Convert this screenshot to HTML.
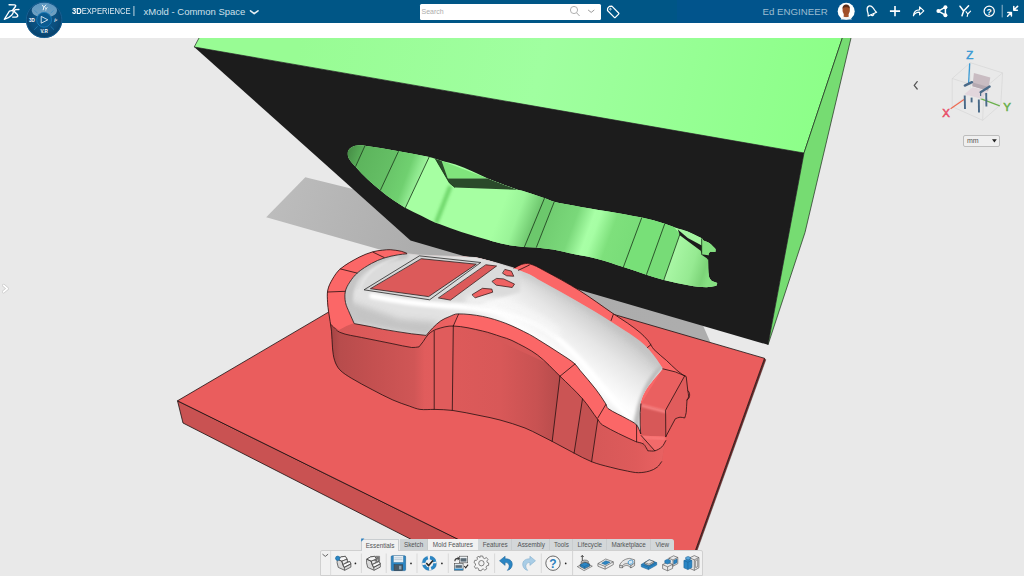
<!DOCTYPE html>
<html>
<head>
<meta charset="utf-8">
<title>3DEXPERIENCE - xMold</title>
<style>
html,body{margin:0;padding:0;overflow:hidden;}
body{width:1024px;height:576px;overflow:hidden;background:#e9e9e9;font-family:"Liberation Sans",sans-serif;position:relative;}
#scene{position:absolute;left:0;top:0;width:1024px;height:576px;}
#topbar{position:absolute;left:0;top:0;width:1024px;height:22.5px;background:#005686;}
#whiteband{position:absolute;left:0;top:22.5px;width:1024px;height:15.5px;background:#ffffff;}
.abs{position:absolute;}
#brand{position:absolute;left:72px;top:6.1px;font-size:8.3px;transform:scaleX(0.915);transform-origin:0 0;color:#e6eef3;letter-spacing:0;white-space:nowrap;line-height:10px;}
#brand b{color:#ffffff;}
#space{position:absolute;left:143.5px;top:5.7px;font-size:9.5px;color:#cfe0ea;white-space:nowrap;line-height:12px;}
#search{position:absolute;left:420px;top:4px;width:181px;height:15.5px;background:#fff;border-radius:1.5px;}
#search span{position:absolute;left:1.5px;top:3.2px;font-size:7px;color:#acacac;line-height:9px;}
#user{position:absolute;left:762.5px;top:6.3px;font-size:9.7px;color:#9dbdd1;white-space:nowrap;line-height:12px;}
#uiover{position:absolute;left:0;top:0;width:1024px;height:576px;}
/* bottom toolbar */
#tabs{position:absolute;left:360.5px;top:538.5px;height:12px;display:flex;font-size:6.6px;color:#4a4a4a;line-height:12px;}
#tabs div{background:#d2d6d8;border-right:1px solid #c2c6c8;padding:0 3.2px;white-space:nowrap;box-sizing:border-box;height:12px;}
#tabs div.on{background:#f1f1f1;}
#toolbar{position:absolute;left:320px;top:550.2px;width:383.2px;height:25.8px;background:#f1f1f1;border:1px solid #d0d0d0;box-sizing:border-box;border-radius:2px 2px 0 0;}
#mm{position:absolute;left:962.5px;top:134.5px;width:37.5px;height:12.5px;box-sizing:border-box;border:1px solid #bdbdbd;border-radius:2px;background:#efefef;font-size:7px;color:#555;line-height:10.5px;}
#mm span{position:absolute;left:3.5px;top:0;}
#tabs2 div{position:absolute;top:538.6px;height:11.9px;box-sizing:border-box;font-size:6.3px;line-height:12.4px;color:#505355;text-align:center;white-space:nowrap;overflow:hidden;}
#tabs2{position:absolute;left:0;top:0;}
</style>
</head>
<body>
<svg id="scene" width="1024" height="576" viewBox="0 0 1024 576">
<defs>

<linearGradient id="gTop" gradientUnits="userSpaceOnUse" x1="300" y1="40" x2="820" y2="160">
 <stop offset="0" stop-color="#98fc94"/><stop offset="0.45" stop-color="#a0ffa0"/><stop offset="1" stop-color="#8cff88"/>
</linearGradient>
<linearGradient id="gShadow" gradientUnits="userSpaceOnUse" x1="280" y1="190" x2="700" y2="330">
 <stop offset="0" stop-color="#bcbcbc"/><stop offset="0.35" stop-color="#acacac"/><stop offset="1" stop-color="#adadad"/>
</linearGradient>

<clipPath id="cavClip"><path d="M347.8,152.4 C347.8,151.4 348.4,150.4 349.0,149.5 C349.5,148.8 350.2,148.2 350.9,147.7 C351.7,147.1 352.6,146.5 353.5,146.2 C354.7,145.8 355.9,145.5 357.2,145.4 C359.8,145.3 362.4,145.3 365.0,145.7 C376.2,147.3 387.4,149.2 398.6,151.2 C408.8,153.0 419.0,155.0 429.1,157.1 C431.2,157.5 433.2,158.1 435.3,158.7 C437.4,159.3 439.5,160.1 441.6,160.7 C446.3,162.1 451.0,163.0 455.6,164.6 C461.4,166.6 467.1,169.2 472.8,171.6 C477.8,173.8 482.8,176.2 487.8,178.4 C491.8,180.1 495.9,181.7 500.0,183.3 C505.8,185.5 511.6,187.7 517.5,189.7 C519.0,190.2 520.7,190.3 522.2,190.8 C529.0,192.9 535.8,195.2 542.5,197.5 C546.7,198.9 550.7,200.8 555.0,201.9 C560.6,203.4 566.3,204.1 572.0,205.2 C578.0,206.3 584.0,207.4 590.0,208.4 C595.6,209.4 601.2,210.2 606.8,211.2 C618.5,213.3 630.2,215.1 641.8,217.6 C649.6,219.3 657.2,221.4 664.8,223.7 C668.6,224.8 672.2,226.5 675.9,227.7 C679.8,229.0 684.0,229.8 687.8,231.4 C692.6,233.3 697.2,235.6 701.7,238.2 C702.6,238.7 702.7,240.1 703.5,240.6 C705.5,241.8 708.0,242.1 709.9,243.4 C712.1,244.9 713.6,247.1 715.5,248.9 C715.5,249.8 715.5,250.8 715.5,251.7 C713.6,251.7 711.8,251.7 709.9,251.7 C709.3,252.9 708.4,254.1 708.1,255.4 C707.8,256.9 708.0,258.5 708.1,260.0 C708.3,265.5 708.0,271.1 709.0,276.5 C709.3,278.3 710.9,279.6 711.8,281.1 C713.6,281.7 715.5,282.4 717.3,283.0 C717.0,283.9 716.7,284.8 716.4,285.7 C713.0,286.2 709.7,287.2 706.3,287.2 C700.7,287.1 695.2,286.3 689.7,285.4 C681.0,283.9 672.4,282.0 663.9,279.9 C658.0,278.4 652.2,276.5 646.4,274.7 C638.7,272.2 631.1,269.5 623.4,267.0 C614.8,264.2 606.3,261.3 597.6,259.0 C588.5,256.6 579.2,255.1 570.0,253.2 C564.3,252.0 558.7,250.6 553.0,249.6 C547.5,248.7 541.9,248.0 536.3,247.5 C532.1,247.1 528.0,247.2 523.8,246.9 C519.6,246.6 515.4,246.3 511.3,245.6 C505.0,244.5 498.7,243.0 492.5,241.3 C482.0,238.4 471.6,235.2 461.3,231.9 C454.1,229.6 447.1,226.9 440.0,224.3 C436.6,223.0 433.3,221.7 430.0,220.2 C427.0,218.8 424.2,217.2 421.3,215.7 C416.1,213.1 410.7,210.7 405.6,207.9 C401.3,205.5 397.1,202.8 393.1,200.0 C388.8,197.0 384.7,193.7 380.6,190.4 C376.4,187.0 372.1,183.6 368.1,179.8 C363.7,175.7 359.6,171.3 355.6,166.8 C353.1,164.0 350.4,161.2 348.6,157.9 C347.7,156.3 347.7,154.3 347.8,152.4Z"/></clipPath>
<linearGradient id="gS0" gradientUnits="userSpaceOnUse" x1="348" y1="152" x2="363" y2="157"><stop offset="0" stop-color="#478f47"/><stop offset="1" stop-color="#5cb45c"/></linearGradient>
<linearGradient id="gS1" gradientUnits="userSpaceOnUse" x1="360" y1="160" x2="392" y2="172"><stop offset="0" stop-color="#5db55d"/><stop offset="1" stop-color="#66c066"/></linearGradient>
<linearGradient id="gS2" gradientUnits="userSpaceOnUse" x1="387" y1="170" x2="421" y2="182.6"><stop offset="0" stop-color="#68c468"/><stop offset="0.55" stop-color="#70d070"/><stop offset="0.78" stop-color="#8ce68c"/><stop offset="1" stop-color="#a2f6a0"/></linearGradient>
<linearGradient id="gS3" gradientUnits="userSpaceOnUse" x1="500" y1="213" x2="536" y2="226.3"><stop offset="0" stop-color="#a6ffa2"/><stop offset="0.45" stop-color="#9af498"/><stop offset="1" stop-color="#68c068"/></linearGradient>
<linearGradient id="gS5" gradientUnits="userSpaceOnUse" x1="543" y1="222" x2="634" y2="255.6"><stop offset="0" stop-color="#70cc70"/><stop offset="0.3" stop-color="#7ad87a"/><stop offset="0.47" stop-color="#a8ffa6"/><stop offset="0.53" stop-color="#a6fea4"/><stop offset="0.7" stop-color="#7ee07c"/><stop offset="1" stop-color="#78dc78"/></linearGradient>
<linearGradient id="gS8" gradientUnits="userSpaceOnUse" x1="671" y1="255" x2="712" y2="268"><stop offset="0" stop-color="#aaf8a6"/><stop offset="0.55" stop-color="#96ea92"/><stop offset="0.85" stop-color="#7cd478"/><stop offset="1" stop-color="#86e082"/></linearGradient>
<filter id="blur2" x="-50%" y="-50%" width="200%" height="200%"><feGaussianBlur stdDeviation="1.6"/></filter>
<filter id="blur1" x="-50%" y="-50%" width="200%" height="200%"><feGaussianBlur stdDeviation="0.8"/></filter>
<filter id="blur3" x="-50%" y="-50%" width="200%" height="200%"><feGaussianBlur stdDeviation="3"/></filter>
<!--PARTDEFS_START-->
<clipPath id="silClip"><path d="M406.7,253.3 C404.9,252.6 403.2,251.7 401.3,251.3 C397.7,250.5 394.0,249.9 390.3,249.7 C387.7,249.5 385.1,249.9 382.5,250.2 C379.3,250.6 376.1,250.8 373.1,251.7 C368.3,253.1 363.5,254.9 359.1,257.2 C352.6,260.6 346.0,264.2 340.3,268.9 C337.0,271.6 334.7,275.4 332.5,279.1 C330.5,282.5 328.6,286.1 327.8,290.0 C326.9,294.1 327.4,298.3 327.6,302.5 C327.7,305.6 328.2,308.8 328.6,311.9 C329.5,318.4 330.8,324.8 331.5,331.2 C332.1,336.8 331.9,342.4 332.5,347.9 C332.9,352.1 333.3,356.4 334.6,360.4 C335.7,363.8 337.3,367.2 339.8,369.8 C343.0,373.2 347.2,375.6 351.2,378.1 C358.0,382.2 365.1,385.9 372.1,389.6 C379.0,393.2 385.8,396.9 392.9,400.0 C398.3,402.4 404.0,404.3 409.6,406.2 C413.0,407.4 416.4,408.9 420.0,409.4 C424.7,410.0 429.5,409.3 434.2,409.4 C440.2,409.6 446.3,409.6 452.3,410.4 C461.6,411.7 470.8,413.7 480.0,415.6 C486.7,416.9 493.4,418.2 500.0,420.0 C508.4,422.3 516.8,424.9 525.0,428.0 C530.2,430.0 535.0,432.7 540.0,435.2 C544.1,437.2 548.2,439.3 552.2,441.4 C559.5,445.2 566.7,449.3 574.1,453.1 C579.9,456.1 585.5,459.3 591.6,461.7 C597.7,464.1 604.0,465.6 610.3,467.2 C616.0,468.7 621.7,470.0 627.5,471.1 C631.1,471.8 634.7,472.7 638.4,472.7 C642.1,472.7 645.8,472.1 649.4,471.1 C652.2,470.3 654.9,469.0 657.2,467.2 C659.1,465.8 660.7,463.9 661.6,461.7 C662.9,458.5 662.7,455.0 663.4,451.6 C664.1,447.9 665.2,444.3 665.8,440.6 C666.0,439.3 665.3,437.9 665.8,436.7 C668.5,430.5 672.1,424.7 675.3,418.8 C676.9,418.2 678.4,417.3 680.0,417.2 C681.6,417.1 683.1,417.7 684.7,418.0 C685.2,416.2 686.0,414.4 686.2,412.5 C686.8,408.4 686.4,404.1 687.0,400.0 C687.2,398.9 688.5,398.1 688.6,396.9 C688.8,394.8 688.0,392.7 687.8,390.6 C687.3,385.9 686.8,381.3 686.2,376.6 C685.7,376.3 685.2,376.1 684.7,375.8 C684.2,375.5 683.6,375.3 683.1,375.0 C681.0,373.5 678.9,372.0 676.9,370.3 C673.3,367.2 670.1,363.8 666.6,360.6 C662.5,356.9 658.0,353.6 654.1,349.7 C652.8,348.4 652.0,346.6 650.9,345.0 C649.9,343.4 649.0,341.7 647.8,340.3 C645.4,337.5 642.8,334.9 640.0,332.5 C636.0,329.1 631.8,326.1 627.5,323.1 C622.9,319.9 618.1,316.9 613.4,313.8 C601.9,306.0 590.9,297.6 579.1,290.3 C567.4,283.0 555.3,276.5 543.1,270.0 C538.7,267.6 534.3,265.0 529.4,263.8 C526.9,263.1 524.1,263.7 521.6,264.4 C518.8,265.2 516.6,268.2 513.8,268.0 C507.3,267.5 501.3,264.2 495.0,262.5 C488.7,260.8 482.4,258.7 476.0,257.6 C471.5,256.8 466.9,257.0 462.4,256.8 C447.6,256.1 432.7,255.8 417.9,255.0 C414.5,254.8 411.1,254.4 407.7,253.9 C407.3,253.8 407.1,253.4 406.7,253.3Z"/></clipPath>
<clipPath id="whiteClip"><path d="M406.7,253.8 C403.8,254.1 400.9,254.3 398.1,254.8 C393.4,255.7 388.7,256.5 384.1,258.0 C379.8,259.4 375.6,261.2 371.6,263.4 C366.7,266.1 361.8,269.1 357.5,272.8 C354.4,275.5 351.9,278.8 349.7,282.2 C347.8,285.1 346.0,288.2 345.3,291.6 C344.6,295.2 344.8,298.9 345.5,302.5 C346.2,306.2 348.1,309.5 349.5,313.0 C351.0,316.6 352.6,320.1 354.2,323.6 C360.0,324.7 365.8,325.7 371.6,326.8 C375.2,327.5 378.8,328.6 382.5,329.2 C392.2,330.9 401.9,332.4 411.7,333.8 C416.5,334.4 421.4,334.8 426.2,335.4 C428.3,333.0 430.2,330.4 432.5,328.1 C435.1,325.5 437.8,322.9 440.8,320.8 C443.4,319.0 446.3,317.9 449.2,316.7 C451.9,315.6 454.6,313.9 457.5,313.9 C465.9,313.8 474.3,314.8 482.5,316.4 C490.5,318.0 498.3,320.5 505.9,323.4 C514.0,326.5 521.7,330.5 529.4,334.4 C532.6,336.0 535.7,338.1 538.8,340.0 C542.5,342.3 546.3,344.6 550.0,347.0 C553.4,349.1 556.7,351.3 560.0,353.5 C562.3,355.0 564.7,356.4 567.0,358.0 C569.7,359.9 572.6,361.7 575.0,364.0 C576.9,365.8 578.3,368.2 580.0,370.3 C585.2,376.6 590.7,382.6 595.6,389.0 C599.3,393.8 602.6,398.8 605.8,403.9 C606.7,405.4 606.7,407.6 608.1,408.6 C613.9,412.7 620.7,415.2 626.9,418.8 C630.2,420.7 634.0,422.2 636.6,425.0 C638.8,427.3 639.3,430.7 640.7,433.6 C640.5,430.7 640.3,427.9 640.2,425.0 C640.1,420.8 640.1,416.7 640.2,412.5 C640.3,408.9 640.0,405.1 640.9,401.6 C641.9,397.7 643.6,394.1 645.6,390.6 C647.8,386.7 650.6,383.2 653.4,379.7 C656.4,375.9 659.7,372.4 662.8,368.8 C660.9,365.8 659.2,362.8 657.2,360.0 C654.7,356.5 652.3,353.1 649.4,349.9 C646.5,346.7 643.4,343.7 640.0,341.0 C635.5,337.4 630.7,334.4 625.9,331.2 C620.8,327.8 615.5,324.5 610.3,321.2 C605.1,318.0 599.9,314.7 594.7,311.6 C588.2,307.7 581.6,303.8 575.0,300.0 C570.0,297.1 565.0,294.3 560.0,291.5 C553.4,287.8 546.6,284.2 540.0,280.5 C536.4,278.5 533.1,275.9 529.4,274.2 C524.3,271.9 519.0,270.2 513.8,268.4 C507.5,266.3 501.3,264.3 495.0,262.5 C488.7,260.7 482.4,258.7 476.0,257.6 C471.5,256.8 466.9,257.0 462.4,256.8 C447.6,256.1 432.7,255.8 417.9,255.0 C414.5,254.8 411.1,254.3 407.7,253.9 C407.4,253.9 407.0,253.8 406.7,253.8Z"/></clipPath>
<linearGradient id="gW1" gradientUnits="userSpaceOnUse" x1="331" y1="0" x2="435" y2="0"><stop offset="0" stop-color="#a44444"/><stop offset="0.09" stop-color="#b84c4c"/><stop offset="0.4" stop-color="#c45050"/><stop offset="0.8" stop-color="#d05656"/><stop offset="0.9" stop-color="#e05c5c"/><stop offset="1" stop-color="#e25d5d"/></linearGradient>
<linearGradient id="gW2" gradientUnits="userSpaceOnUse" x1="453" y1="0" x2="558" y2="0"><stop offset="0" stop-color="#dd5a5a"/><stop offset="0.45" stop-color="#d85858"/><stop offset="0.8" stop-color="#c85252"/><stop offset="1" stop-color="#b84c4c"/></linearGradient>
<linearGradient id="gW3" gradientUnits="userSpaceOnUse" x1="595" y1="0" x2="662" y2="0"><stop offset="0" stop-color="#d65858"/><stop offset="0.6" stop-color="#de5b5b"/><stop offset="1" stop-color="#e86161"/></linearGradient>
<linearGradient id="gCham" gradientUnits="userSpaceOnUse" x1="335" y1="0" x2="455" y2="0"><stop offset="0" stop-color="#d85858"/><stop offset="0.6" stop-color="#e25c5c"/><stop offset="1" stop-color="#ee6262"/></linearGradient>
<linearGradient id="gWhite" gradientUnits="userSpaceOnUse" x1="560" y1="280" x2="500" y2="360"><stop offset="0" stop-color="#c0c0c0"/><stop offset="0.12" stop-color="#d2d2d2"/><stop offset="0.3" stop-color="#e6e6e6"/><stop offset="0.5" stop-color="#f5f5f5"/><stop offset="0.62" stop-color="#fdfdfd"/><stop offset="0.78" stop-color="#ececec"/><stop offset="1" stop-color="#e2e2e2"/></linearGradient>
<!--PARTDEFS_END-->
<!--DEFS-->
</defs>
<g id="shadow">
<polygon points="305.3,177.2 266.2,217.2 711,343.8 703.5,326.5 600,250" fill="url(#gShadow)"/>
</g>
<g id="plate" stroke-linejoin="round">
<polygon points="177.5,400.8 183,423 483,576 532.5,576" fill="#c95252" stroke="#1a1010" stroke-width="0.8"/>
<polygon points="764.5,358.3 765.8,359.8 687.9,576 686.2,576" fill="#6e2c2c" stroke="#3a1616" stroke-width="0.4"/>
<polygon points="177.5,400.8 420.5,258.1 764.5,358.3 686.2,576 532.5,576" fill="#ea5d5d" stroke="#1a1010" stroke-width="0.8"/>
</g>
<g id="box" stroke-linejoin="round">
<polygon points="199,38 203.4,30 845,30 842.3,38 804,153 194.2,47" fill="url(#gTop)" stroke="#1c2a1c" stroke-width="0.7"/>
<polygon points="842.3,38 845,30 852.9,30 851,38 805,232.5 768,344.8 804,153" fill="#76dc72" stroke="#1c2a1c" stroke-width="0.7"/>
<polygon points="194.2,47 804,153 768,344.8 410.5,240.5" fill="#1c1c1c"/>
<g clip-path="url(#cavClip)">
<rect x="340" y="140" width="385" height="155" fill="#a6ffa2"/>
<polygon points="340,140 366.4,142.6 354.2,169.6 340,170" fill="url(#gS0)"/>
<polygon points="366.4,142.6 400.4,147.3 378.5,194.3 354.2,169.6" fill="url(#gS1)"/>
<polygon points="400.4,147.3 431.5,152.0 402.9,213.0 378.5,194.3" fill="url(#gS2)"/>
<polygon points="490,170 546.1,194.3 522.5,251.5 490,251" fill="url(#gS3)"/>
<line x1="450.5" y1="186" x2="436" y2="223" stroke="#6cd468" stroke-width="4.5" filter="url(#blur2)" opacity="0.9"/>
<polygon points="546.1,194.3 556.0,197.3 534.5,252.1 522.5,251.5" fill="#6cc86c"/>
<polygon points="556.0,197.3 643.6,212.7 621.6,271.9 534.5,252.1" fill="url(#gS5)"/>
<polygon points="643.6,212.7 666.6,218.6 644.6,279.8 621.6,271.9" fill="#78e078"/>
<polygon points="666.6,218.6 680.0,234.0 662.3,284.3 644.6,279.8" fill="#77dc77"/>
<polygon points="680,234 720,240 722,290 662.3,284.3" fill="url(#gS8)"/>
<polygon points="441.6,160.7 487.8,178.4 447.8,178.4" fill="#80e47c"/>
<polygon points="435.3,158.7 441.6,160.7 447.8,178.4 487.8,178.4 517.5,189.7 455,187.6 449.4,182.9" fill="#2a4a2a"/>
<polygon points="676.8,228.5 687.8,231.4 701.7,238.2 701.7,245.4 687.8,238.2 679.6,233.5" fill="#a4f4a0"/>
<polygon points="701.7,238.2 703.5,240.6 709.9,243.4 715.5,248.9 715.5,251.7 709.9,251.7 708.1,255.4 701.7,254.4" fill="#84e080"/>
<polygon points="677.8,229.6 687.8,238 701.7,245.4 701.7,254.4 700.7,250.8 679.8,235.2" fill="#1c1c1c"/>
<polygon points="701.2,254.2 708.3,255.2 708.1,260 706.8,258.3 701.2,254.6" fill="#1c1c1c"/>
<polygon points="709.5,262 722,262 722,290 700,290" fill="#78cc74" opacity="0.0"/>
<g stroke="#143014" stroke-width="0.8" fill="none">
<line x1="366.4" y1="142.6" x2="354.2" y2="169.6"/><line x1="400.4" y1="147.3" x2="378.5" y2="194.3"/><line x1="431.5" y1="152.0" x2="402.9" y2="213.0"/><line x1="546.1" y1="194.3" x2="522.5" y2="251.5"/><line x1="556.0" y1="197.3" x2="534.5" y2="252.1"/><line x1="643.6" y1="212.7" x2="621.6" y2="271.9"/><line x1="666.6" y1="218.6" x2="644.6" y2="279.8"/><line x1="680.0" y1="234.0" x2="662.3" y2="284.3"/>
<line x1="701.7" y1="238.2" x2="701.7" y2="254.4"/>
<polyline points="435.3,158.7 449.4,182.9 455,187.6"/>
</g>
</g>
</g>
<!--PART_START--><g id="part" stroke-linejoin="round" stroke-linecap="round">
<path d="M406.7,253.3 C404.9,252.6 403.2,251.7 401.3,251.3 C397.7,250.5 394.0,249.9 390.3,249.7 C387.7,249.5 385.1,249.9 382.5,250.2 C379.3,250.6 376.1,250.8 373.1,251.7 C368.3,253.1 363.5,254.9 359.1,257.2 C352.6,260.6 346.0,264.2 340.3,268.9 C337.0,271.6 334.7,275.4 332.5,279.1 C330.5,282.5 328.6,286.1 327.8,290.0 C326.9,294.1 327.4,298.3 327.6,302.5 C327.7,305.6 328.2,308.8 328.6,311.9 C329.5,318.4 330.8,324.8 331.5,331.2 C332.1,336.8 331.9,342.4 332.5,347.9 C332.9,352.1 333.3,356.4 334.6,360.4 C335.7,363.8 337.3,367.2 339.8,369.8 C343.0,373.2 347.2,375.6 351.2,378.1 C358.0,382.2 365.1,385.9 372.1,389.6 C379.0,393.2 385.8,396.9 392.9,400.0 C398.3,402.4 404.0,404.3 409.6,406.2 C413.0,407.4 416.4,408.9 420.0,409.4 C424.7,410.0 429.5,409.3 434.2,409.4 C440.2,409.6 446.3,409.6 452.3,410.4 C461.6,411.7 470.8,413.7 480.0,415.6 C486.7,416.9 493.4,418.2 500.0,420.0 C508.4,422.3 516.8,424.9 525.0,428.0 C530.2,430.0 535.0,432.7 540.0,435.2 C544.1,437.2 548.2,439.3 552.2,441.4 C559.5,445.2 566.7,449.3 574.1,453.1 C579.9,456.1 585.5,459.3 591.6,461.7 C597.7,464.1 604.0,465.6 610.3,467.2 C616.0,468.7 621.7,470.0 627.5,471.1 C631.1,471.8 634.7,472.7 638.4,472.7 C642.1,472.7 645.8,472.1 649.4,471.1 C652.2,470.3 654.9,469.0 657.2,467.2 C659.1,465.8 660.7,463.9 661.6,461.7 C662.9,458.5 662.7,455.0 663.4,451.6 C664.1,447.9 665.2,444.3 665.8,440.6 C666.0,439.3 665.3,437.9 665.8,436.7 C668.5,430.5 672.1,424.7 675.3,418.8 C676.9,418.2 678.4,417.3 680.0,417.2 C681.6,417.1 683.1,417.7 684.7,418.0 C685.2,416.2 686.0,414.4 686.2,412.5 C686.8,408.4 686.4,404.1 687.0,400.0 C687.2,398.9 688.5,398.1 688.6,396.9 C688.8,394.8 688.0,392.7 687.8,390.6 C687.3,385.9 686.8,381.3 686.2,376.6 C685.7,376.3 685.2,376.1 684.7,375.8 C684.2,375.5 683.6,375.3 683.1,375.0 C681.0,373.5 678.9,372.0 676.9,370.3 C673.3,367.2 670.1,363.8 666.6,360.6 C662.5,356.9 658.0,353.6 654.1,349.7 C652.8,348.4 652.0,346.6 650.9,345.0 C649.9,343.4 649.0,341.7 647.8,340.3 C645.4,337.5 642.8,334.9 640.0,332.5 C636.0,329.1 631.8,326.1 627.5,323.1 C622.9,319.9 618.1,316.9 613.4,313.8 C601.9,306.0 590.9,297.6 579.1,290.3 C567.4,283.0 555.3,276.5 543.1,270.0 C538.7,267.6 534.3,265.0 529.4,263.8 C526.9,263.1 524.1,263.7 521.6,264.4 C518.8,265.2 516.6,268.2 513.8,268.0 C507.3,267.5 501.3,264.2 495.0,262.5 C488.7,260.8 482.4,258.7 476.0,257.6 C471.5,256.8 466.9,257.0 462.4,256.8 C447.6,256.1 432.7,255.8 417.9,255.0 C414.5,254.8 411.1,254.4 407.7,253.9 C407.3,253.8 407.1,253.4 406.7,253.3Z" fill="#d65858"/>
<g clip-path="url(#silClip)">
<rect x="325" y="300" width="110" height="115" fill="url(#gW1)"/>
<rect x="434.2" y="320" width="19" height="95" fill="#e05c5c"/>
<polygon points="453.3,320 562,370 553,445 452.3,415" fill="url(#gW2)"/>
<polygon points="560,376.25 582.5,398.75 574.1,453.1 552.2,441.4" fill="#cb5454"/>
<polygon points="582.5,398.75 597.8,419.5 591.6,461.7 574.1,453.1" fill="#c45151"/>
<polygon points="597.8,419.5 602.5,425 635.3,441.4 647.8,450.8 666,440 666,475 591.6,475 591.6,461.7" fill="url(#gW3)"/>
</g>
<path d="M406.7,253.3 C404.9,252.6 403.2,251.7 401.3,251.3 C397.7,250.5 394.0,249.9 390.3,249.7 C387.7,249.5 385.1,249.9 382.5,250.2 C379.3,250.6 376.1,250.8 373.1,251.7 C368.3,253.1 363.5,254.9 359.1,257.2 C352.6,260.6 346.0,264.2 340.3,268.9 C337.0,271.6 334.7,275.4 332.5,279.1 C330.5,282.5 328.6,286.1 327.8,290.0 C326.9,294.1 327.4,298.3 327.6,302.5 C327.7,305.6 328.1,308.8 328.6,311.9 C329.4,316.3 329.3,321.1 331.5,325.0 C333.3,328.2 336.4,330.9 339.8,332.3 C346.7,335.2 354.4,335.9 361.7,337.5 C372.1,339.7 382.5,341.7 392.9,343.8 C399.2,345.0 405.4,346.7 411.7,347.5 C414.1,347.8 416.6,347.1 419.0,346.9 C420.4,345.2 421.8,343.5 423.1,341.7 C424.9,339.3 426.1,336.4 428.3,334.4 C430.7,332.2 433.6,330.2 436.7,329.2 C442.0,327.4 447.7,325.8 453.3,326.0 C463.2,326.4 472.9,328.8 482.5,331.0 C488.9,332.4 495.0,334.7 501.2,336.7 C504.9,337.9 508.6,338.8 512.0,340.5 C520.7,344.9 529.7,349.2 537.5,355.0 C545.8,361.2 552.6,369.1 560.0,376.2 C567.6,383.6 575.5,390.8 582.5,398.8 C588.2,405.2 592.6,412.7 597.8,419.5 C599.3,421.4 600.4,423.8 602.5,425.0 C613.1,431.2 624.2,436.3 635.3,441.4 C637.8,442.5 640.7,442.4 643.1,443.8 C644.6,444.6 645.3,446.3 646.2,447.7 C646.9,448.7 647.3,449.8 647.8,450.8 C650.1,450.8 652.6,451.4 654.8,450.8 C657.4,450.1 659.9,448.7 661.9,446.9 C663.7,445.2 664.9,442.9 665.8,440.6 C666.3,439.4 665.3,437.9 665.8,436.7 C668.5,430.5 672.1,424.7 675.3,418.8 C676.9,418.2 678.4,417.3 680.0,417.2 C681.6,417.1 683.1,417.7 684.7,418.0 C685.2,416.2 686.0,414.4 686.2,412.5 C686.8,408.4 686.4,404.1 687.0,400.0 C687.2,398.9 688.5,398.1 688.6,396.9 C688.8,394.8 688.0,392.7 687.8,390.6 C687.3,385.9 686.8,381.3 686.2,376.6 C685.7,376.3 685.2,376.1 684.7,375.8 C684.2,375.5 683.6,375.3 683.1,375.0 C681.0,373.5 678.9,372.0 676.9,370.3 C673.3,367.2 670.1,363.8 666.6,360.6 C662.5,356.9 658.0,353.6 654.1,349.7 C652.8,348.4 652.0,346.6 650.9,345.0 C649.9,343.4 649.0,341.7 647.8,340.3 C645.4,337.5 642.8,334.9 640.0,332.5 C636.0,329.1 631.8,326.1 627.5,323.1 C622.9,319.9 618.1,316.9 613.4,313.8 C601.9,306.0 590.9,297.6 579.1,290.3 C567.4,283.0 555.3,276.5 543.1,270.0 C538.7,267.6 534.3,265.0 529.4,263.8 C526.9,263.1 524.1,263.7 521.6,264.4 C518.8,265.2 516.6,268.2 513.8,268.0 C507.3,267.5 501.3,264.2 495.0,262.5 C488.7,260.8 482.4,258.7 476.0,257.6 C471.5,256.8 466.9,257.0 462.4,256.8 C447.6,256.1 432.7,255.8 417.9,255.0 C414.5,254.8 411.1,254.4 407.7,253.9 C407.3,253.8 407.1,253.4 406.7,253.3Z" fill="#fb6767"/>
<path d="M331.5,325.0 C334.3,327.4 336.4,330.9 339.8,332.3 C346.7,335.2 354.4,335.9 361.7,337.5 C372.1,339.7 382.5,341.7 392.9,343.8 C399.2,345.0 405.4,346.7 411.7,347.5 C414.1,347.8 416.6,347.1 419.0,346.9 C420.4,345.2 421.8,343.5 423.1,341.7 C424.9,339.3 426.1,336.4 428.3,334.4 C430.7,332.2 433.6,330.2 436.7,329.2 C442.0,327.4 447.8,327.1 453.3,326.0 C454.7,322.0 456.1,317.9 457.5,313.9 C454.7,314.8 451.9,315.6 449.2,316.7 C446.3,317.9 443.4,319.0 440.8,320.8 C437.8,322.9 435.1,325.5 432.5,328.1 C430.2,330.4 428.3,333.0 426.2,335.4 C421.4,334.8 416.5,334.4 411.7,333.8 C401.9,332.4 392.2,330.9 382.5,329.2 C378.8,328.6 375.2,327.5 371.6,326.8 C365.8,325.7 360.1,323.0 354.2,323.6 C348.7,324.1 344.1,327.9 339.0,330.0 C336.5,328.3 334.0,326.7 331.5,325.0Z" fill="url(#gCham)"/>
<path d="M406.7,253.8 C403.8,254.1 400.9,254.3 398.1,254.8 C393.4,255.7 388.7,256.5 384.1,258.0 C379.8,259.4 375.6,261.2 371.6,263.4 C366.7,266.1 361.8,269.1 357.5,272.8 C354.4,275.5 351.9,278.8 349.7,282.2 C347.8,285.1 346.0,288.2 345.3,291.6 C344.6,295.2 344.8,298.9 345.5,302.5 C346.2,306.2 348.1,309.5 349.5,313.0 C351.0,316.6 352.6,320.1 354.2,323.6 C360.0,324.7 365.8,325.7 371.6,326.8 C375.2,327.5 378.8,328.6 382.5,329.2 C392.2,330.9 401.9,332.4 411.7,333.8 C416.5,334.4 421.4,334.8 426.2,335.4 C428.3,333.0 430.2,330.4 432.5,328.1 C435.1,325.5 437.8,322.9 440.8,320.8 C443.4,319.0 446.3,317.9 449.2,316.7 C451.9,315.6 454.6,313.9 457.5,313.9 C465.9,313.8 474.3,314.8 482.5,316.4 C490.5,318.0 498.3,320.5 505.9,323.4 C514.0,326.5 521.7,330.5 529.4,334.4 C532.6,336.0 535.7,338.1 538.8,340.0 C542.5,342.3 546.3,344.6 550.0,347.0 C553.4,349.1 556.7,351.3 560.0,353.5 C562.3,355.0 564.7,356.4 567.0,358.0 C569.7,359.9 572.6,361.7 575.0,364.0 C576.9,365.8 578.3,368.2 580.0,370.3 C585.2,376.6 590.7,382.6 595.6,389.0 C599.3,393.8 602.6,398.8 605.8,403.9 C606.7,405.4 606.7,407.6 608.1,408.6 C613.9,412.7 620.7,415.2 626.9,418.8 C630.2,420.7 634.0,422.2 636.6,425.0 C638.8,427.3 639.3,430.7 640.7,433.6 C640.5,430.7 640.3,427.9 640.2,425.0 C640.1,420.8 640.1,416.7 640.2,412.5 C640.3,408.9 640.0,405.1 640.9,401.6 C641.9,397.7 643.6,394.1 645.6,390.6 C647.8,386.7 650.6,383.2 653.4,379.7 C656.4,375.9 659.7,372.4 662.8,368.8 C660.9,365.8 659.2,362.8 657.2,360.0 C654.7,356.5 652.3,353.1 649.4,349.9 C646.5,346.7 643.4,343.7 640.0,341.0 C635.5,337.4 630.7,334.4 625.9,331.2 C620.8,327.8 615.5,324.5 610.3,321.2 C605.1,318.0 599.9,314.7 594.7,311.6 C588.2,307.7 581.6,303.8 575.0,300.0 C570.0,297.1 565.0,294.3 560.0,291.5 C553.4,287.8 546.6,284.2 540.0,280.5 C536.4,278.5 533.1,275.9 529.4,274.2 C524.3,271.9 519.0,270.2 513.8,268.4 C507.5,266.3 501.3,264.3 495.0,262.5 C488.7,260.7 482.4,258.7 476.0,257.6 C471.5,256.8 466.9,257.0 462.4,256.8 C447.6,256.1 432.7,255.8 417.9,255.0 C414.5,254.8 411.1,254.3 407.7,253.9 C407.4,253.9 407.0,253.8 406.7,253.8Z" fill="url(#gWhite)"/>
<g clip-path="url(#whiteClip)">
<path d="M406,250 L522,266 L520,292 L480,304 L420,300 L380,294 L340,285 L340,270 L372,255 Z" fill="#dbdbdb" filter="url(#blur2)"/>
<path d="M346,300 L352,324 L430,337 L438,322 L400,319 Z" fill="#c2c2c2" filter="url(#blur3)" opacity="0.95"/>
<path d="M351,322 C345,300 347,284 358,272 C368,262 384,256 404,254" fill="none" stroke="#c4c4c4" stroke-width="10" filter="url(#blur2)"/>
<path d="M360,291 C362,276 376,264 398,257.5" fill="none" stroke="#e9e9e9" stroke-width="1.6" filter="url(#blur1)"/>
<path d="M372,296 C390,300 415,303.6 445,305.8 C480,307.5 510,311 540,326 C560,338 580,358 600,384 C610,397 620,408 630,418" fill="none" stroke="#ffffff" stroke-width="5.5" filter="url(#blur2)"/>
<path d="M470,300 C500,300 530,312 556,332" fill="none" stroke="#f6f6f6" stroke-width="10" filter="url(#blur3)" opacity="0.8"/>
<path d="M518,270 C545,282 580,302 610,322 C630,336 648,352 660,368" fill="none" stroke="#bebebe" stroke-width="5" filter="url(#blur3)" opacity="0.6"/>
<path d="M664,366 C650,378 640,396 636,428" fill="none" stroke="#bcbcbc" stroke-width="6" filter="url(#blur2)"/>
<path d="M665,368 C653,380 646,394 642,412" fill="none" stroke="#f4f4f4" stroke-width="2.2" filter="url(#blur1)"/>
</g>
<polyline points="513.75,268 495,262.5 476,257.6 462.4,256.8 417.9,255 407.7,253.9" fill="none" stroke="#d2d2d2" stroke-width="0.9"/>
<g id="endcap">
<polygon points="640.9,403.9 662.8,368.8 675.3,371.9 684.7,375.8 665.6,410.2" fill="#ea6060"/>
<polygon points="665.6,410.2 684.7,375.8 686.3,376.6 687.8,390.6 688.6,396.9 687,400 686.3,412.5 684.7,418 680,417.2 675.3,418.8 665.8,436.7" fill="#e05c5c"/>
<polygon points="640.9,403.9 665.6,410.2 665.8,436.7 641.2,435.4" fill="#d75858"/>
<polygon points="641.2,435.4 665.8,436.7 661.9,446.9 654.8,450.8" fill="#f26a6a"/>
<polygon points="641.2,435.4 654.8,450.8 647.8,450.8 646.3,447.7 643.1,443.8 640.7,436" fill="#e66060"/>
<line x1="642" y1="405.6" x2="665" y2="411.6" stroke="#ff8c8c" stroke-width="2.4" filter="url(#blur1)"/>
<line x1="642" y1="437.3" x2="664" y2="438.6" stroke="#ff8484" stroke-width="2" filter="url(#blur1)" opacity="0.8"/>
<g fill="none" stroke="#241010" stroke-width="0.8">
<polyline points="640.7,433.6 640.2,425 640.2,412.5 640.9,403.9"/>
<polyline points="684.7,375.8 665.6,410.2 665.8,436.7"/>
<polyline points="641.2,435.6 654.8,450.8"/>
<polyline points="662.8,368.8 675.3,371.9 684.7,375.8"/>
<path d="M687.8,390.6 C690.5,392 690.5,398.5 687,400"/>
</g>
</g>
<g fill="none" stroke="#241010" stroke-width="0.8">
<path d="M406.7,253.3 C404.9,252.6 403.2,251.7 401.3,251.3 C397.7,250.5 394.0,249.9 390.3,249.7 C387.7,249.5 385.1,249.9 382.5,250.2 C379.3,250.6 376.1,250.8 373.1,251.7 C368.3,253.1 363.5,254.9 359.1,257.2 C352.6,260.6 346.0,264.2 340.3,268.9 C337.0,271.6 334.7,275.4 332.5,279.1 C330.5,282.5 328.6,286.1 327.8,290.0 C326.9,294.1 327.4,298.3 327.6,302.5 C327.7,305.6 328.2,308.8 328.6,311.9 C329.5,318.4 330.8,324.8 331.5,331.2 C332.1,336.8 331.9,342.4 332.5,347.9 C332.9,352.1 333.3,356.4 334.6,360.4 C335.7,363.8 337.3,367.2 339.8,369.8 C343.0,373.2 347.2,375.6 351.2,378.1 C358.0,382.2 365.1,385.9 372.1,389.6 C379.0,393.2 385.8,396.9 392.9,400.0 C398.3,402.4 404.0,404.3 409.6,406.2 C413.0,407.4 416.4,408.9 420.0,409.4 C424.7,410.0 429.5,409.3 434.2,409.4 C440.2,409.6 446.3,409.6 452.3,410.4 C461.6,411.7 470.8,413.7 480.0,415.6 C486.7,416.9 493.4,418.2 500.0,420.0 C508.4,422.3 516.8,424.9 525.0,428.0 C530.2,430.0 535.0,432.7 540.0,435.2 C544.1,437.2 548.2,439.3 552.2,441.4 C559.5,445.2 566.7,449.3 574.1,453.1 C579.9,456.1 585.5,459.3 591.6,461.7 C597.7,464.1 604.0,465.6 610.3,467.2 C616.0,468.7 621.7,470.0 627.5,471.1 C631.1,471.8 634.7,472.7 638.4,472.7 C642.1,472.7 645.8,472.1 649.4,471.1 C652.2,470.3 654.9,469.0 657.2,467.2 C659.1,465.8 660.1,463.5 661.6,461.7"/>
<path d="M665.8,436.7 C669.0,430.7 672.1,424.7 675.3,418.8 C676.9,418.2 678.4,417.3 680.0,417.2 C681.6,417.1 683.1,417.7 684.7,418.0 C685.2,416.2 686.0,414.4 686.2,412.5 C686.8,408.4 686.4,404.1 687.0,400.0 C687.2,398.9 688.5,398.1 688.6,396.9 C688.8,394.8 688.0,392.7 687.8,390.6 C687.3,385.9 686.8,381.3 686.2,376.6 C685.7,376.3 685.2,376.1 684.7,375.8 C684.2,375.5 683.6,375.3 683.1,375.0 C681.0,373.5 678.9,372.0 676.9,370.3 C673.3,367.2 670.1,363.8 666.6,360.6 C662.5,356.9 658.0,353.6 654.1,349.7 C652.8,348.4 652.0,346.6 650.9,345.0 C649.9,343.4 649.0,341.7 647.8,340.3 C645.4,337.5 642.8,334.9 640.0,332.5 C636.0,329.1 631.8,326.1 627.5,323.1 C622.9,319.9 618.1,316.9 613.4,313.8 C601.9,306.0 590.9,297.6 579.1,290.3 C567.4,283.0 555.3,276.5 543.1,270.0 C538.7,267.6 534.3,265.0 529.4,263.8 C526.9,263.1 524.1,263.7 521.6,264.4 C518.8,265.2 516.4,266.8 513.8,268.0"/>
<path d="M331.5,325.0 C334.3,327.4 336.4,330.9 339.8,332.3 C346.7,335.2 354.4,335.9 361.7,337.5 C372.1,339.7 382.5,341.7 392.9,343.8 C399.2,345.0 405.4,346.7 411.7,347.5 C414.1,347.8 416.6,347.1 419.0,346.9 C420.4,345.2 421.8,343.5 423.1,341.7 C424.9,339.3 426.1,336.4 428.3,334.4 C430.7,332.2 433.6,330.2 436.7,329.2 C442.0,327.4 447.7,325.8 453.3,326.0 C463.2,326.4 472.9,328.8 482.5,331.0 C488.9,332.4 495.0,334.7 501.2,336.7 C504.9,337.9 508.6,338.8 512.0,340.5 C520.7,344.9 529.7,349.2 537.5,355.0 C545.8,361.2 552.6,369.1 560.0,376.2 C567.6,383.6 575.5,390.8 582.5,398.8 C588.2,405.2 592.6,412.7 597.8,419.5 C599.3,421.4 600.4,423.8 602.5,425.0 C613.1,431.2 624.2,436.3 635.3,441.4 C637.8,442.5 640.7,442.4 643.1,443.8 C644.6,444.6 645.3,446.3 646.2,447.7 C646.9,448.7 647.3,449.8 647.8,450.8 C650.1,450.8 652.6,451.4 654.8,450.8 C657.4,450.1 659.9,448.7 661.9,446.9 C663.7,445.2 664.5,442.7 665.8,440.6"/>
<path d="M406.7,253.8 C403.8,254.1 400.9,254.3 398.1,254.8 C393.4,255.7 388.7,256.5 384.1,258.0 C379.8,259.4 375.6,261.2 371.6,263.4 C366.7,266.1 361.8,269.1 357.5,272.8 C354.4,275.5 351.9,278.8 349.7,282.2 C347.8,285.1 346.0,288.2 345.3,291.6 C344.6,295.2 344.8,298.9 345.5,302.5 C346.2,306.2 348.1,309.5 349.5,313.0 C351.0,316.6 352.6,320.1 354.2,323.6 C360.0,324.7 365.8,325.7 371.6,326.8 C375.2,327.5 378.8,328.6 382.5,329.2 C392.2,330.9 401.9,332.4 411.7,333.8 C416.5,334.4 421.4,334.8 426.2,335.4 C428.3,333.0 430.2,330.4 432.5,328.1 C435.1,325.5 437.8,322.9 440.8,320.8 C443.4,319.0 446.3,317.9 449.2,316.7 C451.9,315.6 454.6,313.9 457.5,313.9 C465.9,313.8 474.3,314.8 482.5,316.4 C490.5,318.0 498.3,320.5 505.9,323.4 C514.0,326.5 521.7,330.5 529.4,334.4 C532.6,336.0 535.7,338.1 538.8,340.0 C542.5,342.3 546.3,344.6 550.0,347.0 C553.4,349.1 556.7,351.3 560.0,353.5 C562.3,355.0 564.7,356.4 567.0,358.0 C569.7,359.9 572.6,361.7 575.0,364.0 C576.9,365.8 578.3,368.2 580.0,370.3 C585.2,376.6 590.7,382.6 595.6,389.0 C599.3,393.8 602.6,398.8 605.8,403.9 C606.7,405.4 606.7,407.6 608.1,408.6 C613.9,412.7 620.7,415.2 626.9,418.8 C630.2,420.7 634.0,422.2 636.6,425.0 C638.8,427.3 639.3,430.7 640.7,433.6"/>
<line x1="373.1" y1="252.2" x2="384.1" y2="257.5"/>
<line x1="340.3" y1="268.9" x2="357.2" y2="273.1"/>
<line x1="327.8" y1="292.0" x2="345.3" y2="291.3"/>
<line x1="453.3" y1="326.0" x2="458.5" y2="314.2"/>
<line x1="560.0" y1="376.2" x2="575.0" y2="364.0"/>
<line x1="597.8" y1="418.0" x2="605.8" y2="404.5"/>
<line x1="636.6" y1="425.0" x2="636.6" y2="441.8"/>
<line x1="518.4" y1="270.3" x2="529.4" y2="265.0"/>
<line x1="613.4" y1="314.1" x2="611.1" y2="320.5"/>
<line x1="650.9" y1="344.7" x2="647.5" y2="347.5"/>
<line x1="434.2" y1="331.0" x2="434.2" y2="409.4"/>
<line x1="453.3" y1="326.0" x2="452.3" y2="410.4"/>
<line x1="560.0" y1="376.2" x2="552.2" y2="441.4"/>
<line x1="582.5" y1="398.8" x2="574.1" y2="453.1"/>
<line x1="597.8" y1="419.5" x2="591.6" y2="461.7"/>
</g>
<g id="features">
<polygon points="419.8,255.9 480.8,262.5 429.6,299.8 364.4,289.9" fill="#d6d6d6" stroke="#2a2a2a" stroke-width="0.8"/>
<polygon points="421.6,258.75 476.3,264.2 428.6,296.6 370.8,288.75" fill="#dc5a5a" stroke="#2a2020" stroke-width="0.8"/>
<polygon points="486.2,264.8 496.6,266 450.4,300.1 438.75,298" fill="#dc5a5a" stroke="#241010" stroke-width="0.7"/>
<polygon points="505.2,269.5 511.4,271.1 513.75,276.25 506.7,275.8 502.8,273.4" fill="#ee6262" stroke="#241010" stroke-width="0.7"/>
<polygon points="492.2,281.25 496.6,278.4 503.6,278.9 514.5,284.1 512.2,287.5 496.6,285.2" fill="#ee6262" stroke="#241010" stroke-width="0.7"/>
<polygon points="472.3,294.5 482.5,288.3 491.9,289.1 492.7,292.2 475.5,297.7" fill="#ee6262" stroke="#241010" stroke-width="0.7"/>
</g>
</g><!--PART_END-->
</svg>
<div id="whiteband"></div>
<div id="topbar"></div>
<div id="midbar" style="position:absolute;left:676.5px;top:0;width:184.7px;height:22.5px;background:#01548c"></div>
<!--UI_START-->
<div id="brand"><b>3D</b>EXPERIENCE&nbsp;<span style="font-size:10px;position:relative;top:-0.5px;color:#dfe9ef">|</span></div>
<div id="space">xMold - Common Space</div>
<div id="search"><span>Search</span></div>
<div id="user">Ed ENGINEER</div>
<div id="mm"><span>mm</span></div>
<div id="toolbar"></div>
<div id="tabs2"><div style="left:361.2px;width:37.7px;background:#f1f1f1;border-radius:2px 0 0 0;border:0.6px solid #c9cdd0;border-bottom:none;line-height:11.2px;height:12.6px;">Essentials</div><div style="left:399.5px;width:28.3px;background:#ced2d4;box-shadow:inset -0.7px 0 0 #c4c8ca;">Sketch</div><div style="left:428.2px;width:49.4px;background:#f1f1f1;">Mold Features</div><div style="left:478.0px;width:34.3px;background:#d3d7d9;box-shadow:inset -0.7px 0 0 #c4c8ca;">Features</div><div style="left:512.3px;width:37.7px;background:#d3d7d9;box-shadow:inset -0.7px 0 0 #c4c8ca;">Assembly</div><div style="left:550.0px;width:22.9px;background:#d3d7d9;box-shadow:inset -0.7px 0 0 #c4c8ca;">Tools</div><div style="left:572.9px;width:33.8px;background:#d3d7d9;box-shadow:inset -0.7px 0 0 #c4c8ca;">Lifecycle</div><div style="left:606.7px;width:43.9px;background:#d3d7d9;box-shadow:inset -0.7px 0 0 #c4c8ca;">Marketplace</div><div style="left:650.6px;width:23.2px;background:#d3d7d9;border-radius:0 2.5px 0 0;">View</div></div>
<svg id="uiover" width="1024" height="576" viewBox="0 0 1024 576">
<defs>
<radialGradient id="gComp" cx="0.5" cy="0.45" r="0.55"><stop offset="0" stop-color="#0d5a8e"/><stop offset="0.7" stop-color="#0a4d7c"/><stop offset="1" stop-color="#083f68"/></radialGradient>
<linearGradient id="gLens" x1="0" y1="0" x2="0" y2="1"><stop offset="0" stop-color="#5f9ac4"/><stop offset="1" stop-color="#7aa6c4"/></linearGradient>
<clipPath id="lensClip"><circle cx="44.1" cy="19.8" r="17.2"/></clipPath>
</defs>
<!-- DS logo -->
<g fill="none" stroke="#ffffff" stroke-width="1.45" stroke-linecap="round" stroke-linejoin="round">
<path d="M9.1,4.7 L14.7,4.9 Q16.3,5.3 15.3,6.8 L12.9,10"/>
<path d="M18.9,9.5 L15.7,9.6 Q13.6,10.2 14.7,12 L17.3,14.5 Q18.5,16.7 16.3,17 L12.7,17.1"/>
<path d="M12.9,10.3 L9.4,11.1 L4.3,19.3 Q9,18 11.6,15.2 Q14,12.6 13.1,10.4 Z" stroke-width="1.25"/>
</g>
<!-- compass -->
<circle cx="44.1" cy="19.8" r="18.3" fill="url(#gComp)"/>
<circle cx="44.1" cy="19.8" r="17.8" fill="none" stroke="#1b6ba3" stroke-width="0.9" opacity="0.8"/>
<g clip-path="url(#lensClip)"><ellipse cx="44.4" cy="10.2" rx="12.6" ry="7.6" fill="url(#gLens)" opacity="0.95"/></g>
<circle cx="44.1" cy="19.8" r="7.4" fill="#0b5a90" stroke="#1a7ab8" stroke-width="0.9"/>
<g stroke="#2d8cc8" stroke-width="0.7" opacity="0.9"><line x1="37.6" y1="26.3" x2="34.2" y2="29.7"/><line x1="50.6" y1="26.3" x2="54" y2="29.7"/><line x1="37.6" y1="13.3" x2="34.6" y2="10.3"/><line x1="50.6" y1="13.3" x2="53.6" y2="10.3"/></g>
<path d="M41.2,16.4 L41.2,23.2 L47.8,19.8 Z" fill="none" stroke="#dfeaf2" stroke-width="0.9" stroke-linejoin="round"/>
<g fill="#ffffff" font-family="Liberation Sans, sans-serif" font-weight="bold" font-size="4.6" text-anchor="middle">
<text x="32" y="21.6">3D</text><text x="44.1" y="32.6">V.R</text>

<text x="55.6" y="21.5" font-style="italic">i&#178;</text>
</g>
<path d="M42.4,5.2 L43.8,7.4 L43.2,9.8 M45.8,5 L43.8,7.4" fill="none" stroke="#ffffff" stroke-width="0.9" stroke-linecap="round"/><path d="M45.4,7.6 L46,9 L47.2,7.4 M46,9 L45.8,10.2" fill="none" stroke="#ffffff" stroke-width="0.7" stroke-linecap="round"/>
<!-- chevron after space name -->
<path d="M250.5,10.8 L254.2,13.6 L258,10.8" fill="none" stroke="#e6eef3" stroke-width="1.6" stroke-linecap="round" stroke-linejoin="round"/>
<!-- search icons -->
<circle cx="574" cy="10" r="3.6" fill="none" stroke="#a8a8a8" stroke-width="0.9"/><line x1="576.6" y1="12.8" x2="579.6" y2="16" stroke="#a8a8a8" stroke-width="1"/>
<path d="M588.4,10.2 L591.2,12.4 L594,10.2" fill="none" stroke="#9a9a9a" stroke-width="1" stroke-linecap="round"/>
<!-- tag -->
<g transform="translate(613.2,11.9) rotate(45)" fill="none" stroke="#ffffff" stroke-linejoin="round"><path d="M-6.6,-1.2 L-5,-3.1 L4.6,-3.1 Q5.4,-3.1 5.4,-2.3 L5.4,2.3 Q5.4,3.1 4.6,3.1 L-5,3.1 L-6.6,1.2 Z" stroke-width="1.25"/><circle cx="-3.9" cy="0" r="0.8" stroke-width="0.8"/></g>
<!-- avatar -->
<circle cx="846.2" cy="11.2" r="8.5" fill="#ffffff"/>
<path d="M843.9,13 L843.6,17.2 L848.8,17.2 L848.5,13 Z" fill="#a5532c"/>
<ellipse cx="846.2" cy="10" rx="3.7" ry="4.9" fill="#a04e28"/>
<path d="M842.5,9 C842.4,5.4 844.4,4.4 846.2,4.4 C848,4.4 850,5.4 849.9,9 C849.2,6.6 843.2,6.6 842.5,9Z" fill="#5c2c18"/>
<path d="M840.6,19.6 C841.6,16.6 843.8,16.2 846.2,17.6 C848.6,16.2 850.8,16.6 851.8,19.6 Z" fill="#f4f4f4"/>
<!-- right icons -->
<g fill="none" stroke="#ffffff" stroke-linecap="round" stroke-linejoin="round">
<g transform="translate(871,11) rotate(-24)" stroke-width="1.25"><path d="M-4.6,3.4 C-3.4,2 -3.6,-0.6 -3.2,-2 C-2.6,-4.4 -1.2,-5.4 0,-5.4 C1.2,-5.4 2.6,-4.4 3.2,-2 C3.6,-0.6 3.4,2 4.6,3.4 Z"/><path d="M-1.4,3.6 C-1.2,5.2 1.2,5.2 1.4,3.6"/></g>
<path d="M895,6 L895,16.2 M889.9,11.1 L900.1,11.1" stroke-width="1.6" stroke-linecap="butt"/>
<path d="M913.4,15.8 C913.8,11.8 916.2,9.9 919.6,9.9 L919.6,6.8 L923.8,10.9 L919.6,14.8 L919.6,12.2 C917,12.1 915,13.2 913.4,15.8 Z" stroke-width="1.15"/>
<path d="M945.4,7.2 L938.4,11.1 L945.4,15.2 Z" stroke-width="1.5"/>
<path d="M960,6.2 L963.6,11 L962,15.8 M968.6,5.8 L963.6,11" stroke-width="1.5"/>
<path d="M966,11.6 L967.8,14 L970.6,11.2 M967.8,14 L967.2,16.4" stroke-width="1.1"/>
<circle cx="989.2" cy="11.2" r="5.1" stroke-width="1.25"/>
</g>
<g fill="#ffffff"><circle cx="945.4" cy="7.2" r="2"/><circle cx="938.4" cy="11.1" r="2"/><circle cx="945.4" cy="15.2" r="2"/></g>
<text x="989.2" y="14.5" font-family="Liberation Sans, sans-serif" font-weight="bold" font-size="8.6" fill="#ffffff" text-anchor="middle">?</text>
<line x1="1002.2" y1="4.8" x2="1002.2" y2="17.4" stroke="#b9cedb" stroke-width="0.8"/>
<g fill="none" stroke="#ffffff" stroke-width="1.5" stroke-linecap="round" stroke-linejoin="round">
<path d="M1017.6,6.4 L1014.2,9.8 M1013.8,6.6 L1013.8,10.2 L1017.4,10.2"/>
<path d="M1007.6,16.2 L1011,12.8 M1011.4,16 L1011.4,12.4 L1007.8,12.4"/>
</g>
<!-- left handle -->
<path d="M3.6,285.4 L7.4,288.6 L3.6,291.8" fill="none" stroke="#c9c9c9" stroke-width="3.1" stroke-linecap="round" stroke-linejoin="round"/>
<path d="M3.6,285.4 L7.4,288.6 L3.6,291.8" fill="none" stroke="#ffffff" stroke-width="1.8" stroke-linecap="round" stroke-linejoin="round"/>
<g id="viewcube">
<path d="M917.2,81.6 L914.2,85.3 L917.2,89" fill="none" stroke="#555555" stroke-width="1.25" stroke-linecap="round" stroke-linejoin="round"/>
<g fill="none" stroke="#d4d4d4" stroke-width="0.6">
<polygon points="970.3,62.7 1002.6,72.9 1000.8,104.5 982.7,120.3 952.2,106.7 952.2,78.5"/>
<polyline points="952.2,78.5 983.8,88.7 1002.6,72.9"/><line x1="983.8" y1="88.7" x2="982.7" y2="120.3"/>
<polyline points="952.2,106.7 970.5,93 1000.8,104.5" opacity="0.6"/><line x1="970.3" y1="62.7" x2="970.5" y2="93" opacity="0.6"/>
</g>
<line x1="969.7" y1="63.4" x2="968.5" y2="85" stroke="#3a9ad4" stroke-width="1.3"/>
<line x1="950.6" y1="108.8" x2="964" y2="99.6" stroke="#ee6a50" stroke-width="1.2"/>
<line x1="980.6" y1="98.6" x2="999.8" y2="105.8" stroke="#6ab04c" stroke-width="1.3"/>
<!-- chair -->
<polygon points="973.9,73 990.3,77.4 988.1,90.7 972.5,86.3" fill="#c9bcc2"/>
<polygon points="972.6,82.6 988.8,87 988.1,90.7 972.5,86.3" fill="#b4a8b0"/>
<polygon points="964.4,94.2 972.5,87.3 988.5,90.9 981.4,98.8" fill="#e2d6dc"/>
<g stroke="#4a6a88" stroke-width="1.9" stroke-linecap="butt">
<line x1="964.7" y1="95.4" x2="965" y2="109"/><line x1="978.8" y1="99.6" x2="979" y2="112.6"/><line x1="986.2" y1="93" x2="986.4" y2="106.6"/><line x1="971.6" y1="97.6" x2="971.6" y2="102.4"/>
</g>
<g stroke="#4a6a88" stroke-width="2.4" stroke-linecap="round">
<line x1="964.8" y1="85.6" x2="972" y2="82.2"/><line x1="980.6" y1="92.2" x2="989.6" y2="86.6"/>
</g>
<line x1="980.6" y1="92.4" x2="980.6" y2="96" stroke="#4a6a88" stroke-width="1.2"/>
<g font-family="Liberation Sans, sans-serif" font-size="11.5" text-anchor="middle">
<text x="969.8" y="59.4" fill="#3a9ad4" stroke="#3a9ad4" stroke-width="0.55">Z</text>
<text x="946" y="116.6" fill="#e8506a" stroke="#e8506a" stroke-width="0.55">X</text>
<text x="1007" y="110.8" fill="#6ab04c" stroke="#6ab04c" stroke-width="0.55">Y</text>
</g>
<path d="M992,139.2 L996.8,139.2 L994.4,142.4 Z" fill="#222"/>
</g>
<g id="toolicons">
<line x1="330.6" y1="551" x2="330.6" y2="576" stroke="#d2d2d2" stroke-width="0.7"/>
<path d="M322.8,554.4 L325.3,556.4 L327.8,554.4" fill="none" stroke="#555" stroke-width="0.9" stroke-linecap="round" stroke-linejoin="round"/>
<path d="M361.2,538.6 L364.4,538.6 L361.2,541.8 Z" fill="#2a7fc0"/>
<g stroke="#cfcfcf" stroke-width="0.7"><line x1="361.4" y1="553.5" x2="361.4" y2="573"/><line x1="386.2" y1="553.5" x2="386.2" y2="573"/><line x1="417" y1="553.5" x2="417" y2="573"/><line x1="448.3" y1="553.5" x2="448.3" y2="573"/><line x1="494.6" y1="553.5" x2="494.6" y2="573"/><line x1="541.3" y1="553.5" x2="541.3" y2="573"/></g>
<line x1="572.6" y1="550.5" x2="572.6" y2="576" stroke="#cfcfcf" stroke-width="0.9"/>
<g fill="#222"><circle cx="355.4" cy="563.4" r="0.85"/><circle cx="411" cy="563.4" r="0.85"/><circle cx="441.9" cy="563.4" r="0.85"/><circle cx="565.7" cy="563.4" r="0.85"/></g>
<!-- 1 part icon -->
<g transform="translate(343.6,563.2)" stroke="#444" stroke-width="0.75" stroke-linejoin="round">
<path d="M-6.3,-4 L-2.4,-6.3 L1.7,-6.9 L3.5,-4 L3.8,-1.3 L6.2,-1.7 L7.3,0.7 L7.3,3.9 L1.1,7.1 L-5.3,4.2 L-6.5,-0.5 Z" fill="#d9d9d9"/>
<path d="M-6.3,-4 L-2.4,-6.3 L1.7,-6.9 L3.5,-4 L-1.8,-2 Z" fill="#f6f6f6"/>
<path d="M-1.8,-2 L3.5,-4 L3.8,-1.3 L-0.8,1.4 Z" fill="#ececec"/>
<path d="M-0.8,1.4 L6.2,-1.7 L7.3,0.7 L0.6,4.2 Z" fill="#fafafa"/>
<path d="M-6.3,-4 L-1.8,-2 L-0.8,1.4 L0.6,4.2 L1.1,7.1 M0.6,4.2 L7.3,0.7" fill="none"/>
<circle cx="-5.9" cy="-4.9" r="2.2" fill="#2a86c4" stroke="#1d6aa0" stroke-width="0.6"/>
</g>
<!-- 2 part with arrow -->
<g transform="translate(373,563.2)" stroke="#444" stroke-width="0.75" stroke-linejoin="round">
<path d="M-6.3,-4 L-2.4,-6.3 L1.7,-6.9 L3.5,-4 L3.8,-1.3 L6.2,-1.7 L7.3,0.7 L7.3,3.9 L1.1,7.1 L-5.3,4.2 L-6.5,-0.5 Z" fill="#d9d9d9"/>
<path d="M-6.3,-4 L-2.4,-6.3 L1.7,-6.9 L3.5,-4 L-1.8,-2 Z" fill="#f6f6f6"/>
<path d="M-1.8,-2 L3.5,-4 L3.8,-1.3 L-0.8,1.4 Z" fill="#ececec"/>
<path d="M-0.8,1.4 L6.2,-1.7 L7.3,0.7 L0.6,4.2 Z" fill="#fafafa"/>
<path d="M-6.3,-4 L-1.8,-2 L-0.8,1.4 L0.6,4.2 L1.1,7.1 M0.6,4.2 L7.3,0.7" fill="none"/>
<path d="M2.6,-7 L6.6,-7 L6.6,-2.2 L5.2,-2.2 L5.2,-4.6 L2.4,-1.8 L1.4,-2.8 L4.2,-5.6 L2.6,-5.6 Z" fill="#7a7a7a" stroke="#555" stroke-width="0.4"/>
</g>
<!-- 3 floppy -->
<g transform="translate(398.4,563.2)">
<rect x="-7.2" y="-7.4" width="14.4" height="14.8" rx="1" fill="#2b86c4" stroke="#1b5f92" stroke-width="0.6"/>
<rect x="-4.8" y="-7.4" width="9.6" height="6.4" fill="#e6eef4" stroke="#6f8ea6" stroke-width="0.4"/>
<line x1="-4" y1="-5.4" x2="4" y2="-5.4" stroke="#9ab" stroke-width="0.5"/><line x1="-4" y1="-3.6" x2="4" y2="-3.6" stroke="#9ab" stroke-width="0.5"/>
<rect x="-4.4" y="1.4" width="8.8" height="6" fill="#4a5a66" stroke="#2a3a46" stroke-width="0.4"/>
<rect x="0.6" y="2.6" width="2.4" height="3.6" fill="#8aa0b0"/>
</g>
<!-- 4 refresh w/ check -->
<g transform="translate(429.3,563.2)" fill="none" stroke-linecap="butt">
<circle r="5.6" stroke="#2b86c4" stroke-width="3.2" stroke-dasharray="6.6 2.2"/>
<circle r="7.3" stroke="#1b5f92" stroke-width="0.4" stroke-dasharray="6.6 2.2" opacity="0.6"/>
<path d="M-3,-0.2 L-0.6,2.4 L3.6,-2.6" stroke="#2a2a2a" stroke-width="1.6" stroke-linejoin="round"/>
</g>
<!-- 5 data icon -->
<g transform="translate(460.7,563.2)">
<rect x="-1.4" y="-7" width="8.4" height="6.6" fill="#eef2f5" stroke="#4a4a4a" stroke-width="0.6"/>
<rect x="-0.2" y="-5" width="6" height="3.4" fill="#5a6a76"/>
<rect x="-6.4" y="0.2" width="8.8" height="6.8" fill="#dfe6ea" stroke="#4a4a4a" stroke-width="0.6"/>
<rect x="-5.2" y="2" width="6.4" height="2.6" fill="#5a6a76"/>
<rect x="-6.4" y="5.4" width="8.8" height="1.6" fill="#2b86c4"/>
<path d="M-6.4,-2 C-6.4,-4.6 -4.6,-5.4 -3,-5.4 L-3,-6.8 L-0.8,-4.6 L-3,-2.6 L-3,-4 C-4.4,-4 -5.2,-3.4 -5.2,-2 Z" fill="#3a3a3a"/>
<path d="M3.6,2.8 L5,4.6 L7.4,1.4" fill="none" stroke="#2a2a2a" stroke-width="1.1"/>
</g>
<!-- 6 gear -->
<g transform="translate(481.4,563.2)" fill="none" stroke="#666" stroke-width="0.8" stroke-linejoin="round">
<path d="M-1.3,-7.2 L1.3,-7.2 L1.8,-5.3 L3.3,-4.6 L5,-5.7 L6.6,-3.7 L5.4,-2.2 L5.8,-0.8 L7.3,-0.2 L7.2,2.2 L5.4,2.6 L4.6,4 L5.4,5.6 L3.4,7 L2,5.8 L0.6,6.1 L-0.2,7.6 L-2.6,7.2 L-2.8,5.5 L-4.2,4.6 L-5.9,5.2 L-7.1,3.2 L-5.8,2 L-6,0.4 L-7.4,-0.6 L-6.6,-2.9 L-4.9,-2.8 L-3.9,-4.1 L-4.5,-5.8 L-2.5,-6.9 L-1.6,-5.6 Z" fill="#f4f4f4"/>
<circle r="2.7" fill="#f1f1f1"/>
</g>
<!-- 7 undo -->
<g transform="translate(506.3,563.2)">
<path d="M-6.8,-2.4 L-1.2,-7 L-1.2,-4.4 C4.6,-4.6 7,-0.8 5.6,3.2 C4.8,5.4 3,6.8 1,7.2 C3,5 3.4,2.6 2.2,0.8 C1.4,-0.4 0.2,-0.8 -1.2,-0.6 L-1.2,2.2 Z" fill="#2b86c4" stroke="#1b5f92" stroke-width="0.5" stroke-linejoin="round"/>
</g>
<!-- 8 redo -->
<g transform="translate(528.7,563.2) scale(-1,1)">
<path d="M-6.8,-2.4 L-1.2,-7 L-1.2,-4.4 C4.6,-4.6 7,-0.8 5.6,3.2 C4.8,5.4 3,6.8 1,7.2 C3,5 3.4,2.6 2.2,0.8 C1.4,-0.4 0.2,-0.8 -1.2,-0.6 L-1.2,2.2 Z" fill="#a9cde6" stroke="#7aa9c8" stroke-width="0.5" stroke-linejoin="round"/>
</g>
<!-- 9 help -->
<circle cx="553" cy="563.2" r="7.2" fill="#f6f6f6" stroke="#5a5a5a" stroke-width="0.9"/>
<text x="553" y="567.6" font-family="Liberation Sans, sans-serif" font-weight="bold" font-size="12" fill="#2b7fbd" text-anchor="middle">?</text>
<!-- mold icons -->
<g transform="translate(584.7,563.2)" stroke="#3a3a3a" stroke-width="0.55" stroke-linejoin="round">
<path d="M-7.4,3.4 L0.6,0 L7.6,3 L-0.6,7.4 Z" fill="#f2f2f2"/>
<path d="M-4.6,1.2 L0.4,-1.2 L5,0.8 L5,3 L-0.2,5.6 L-4.6,3.4 Z" fill="#2b86c4"/>
<path d="M-4.6,1.2 L-0.2,3.4 L5,0.8 M-0.2,3.4 L-0.2,5.6" fill="none" stroke="#1b5f92"/>
<path d="M-3.6,-1.6 C-2,-3.6 2,-3.6 3.6,-2 L3.6,0 C2,-1.6 -2,-1.6 -3.6,0.2 Z" fill="#c8c8c8"/>
<path d="M-2.4,-7.6 L-2.4,-2.4 M-3.8,-6.2 L-2.4,-7.8 L-1,-6.2" fill="none" stroke="#2a2a2a" stroke-width="0.8"/>
</g>
<g transform="translate(605.5,563.2)" stroke="#3a3a3a" stroke-width="0.55" stroke-linejoin="round">
<path d="M-7.6,0.4 L0.2,-4.2 L7.8,-1.4 L7.8,1.4 L-0.4,6 L-7.6,3 Z" fill="#ececec"/>
<path d="M-7.6,0.4 L-0.4,3.2 L7.8,-1.4 M-0.4,3.2 L-0.4,6" fill="none"/>
<path d="M-3.8,0 L0.4,-2.4 L4.6,-1 L0,1.6 Z" fill="#2b86c4" stroke="#1b5f92"/>
</g>
<g transform="translate(627.2,563.2)" stroke="#3a3a3a" stroke-width="0.55" stroke-linejoin="round">
<path d="M-7.6,2.2 C-6,-2.6 -1,-4.6 2.4,-4.8 L7.4,-3.4 L7.4,2.4 L3.6,4.8 C1.4,1.6 -2.6,1.4 -4.8,4.6 L-7.6,4.4 Z" fill="#e6e6e6"/>
<path d="M-7.6,2.2 L-4.8,2.6 C-2.6,-0.4 1.4,-0.2 3.6,2.6 L7.4,-0.2 M-4.8,2.6 L-4.8,4.6 M3.6,2.6 L3.6,4.8" fill="none"/>
<ellipse cx="3.4" cy="-1" rx="2.6" ry="2" fill="#d8e8f2" stroke="#2b86c4" stroke-width="0.7" transform="rotate(-25 3.4 -1)"/>
</g>
<g transform="translate(648.9,563.2)" stroke="#3a3a3a" stroke-width="0.55" stroke-linejoin="round">
<path d="M-7.6,1.2 L0.2,-3.4 L7.8,-0.6 L7.8,1.8 L-0.4,6.4 L-7.6,3.6 Z" fill="#2b86c4" stroke="#1b5f92"/>
<path d="M-7.6,1.2 L-0.4,4 L7.8,-0.6 M-0.4,4 L-0.4,6.4" fill="none" stroke="#1b5f92"/>
<path d="M-4.2,-0.6 L0.4,-3.4 L5,-1.8 L5,-0.4 L0,2.4 L-4.2,0.8 Z" fill="#e6e6e6"/>
<path d="M-4.2,-0.6 L0,1 L5,-1.8" fill="none"/>
</g>
<g transform="translate(670.2,563.2)" stroke="#3a3a3a" stroke-width="0.55" stroke-linejoin="round">
<path d="M-1.4,-5 L3.4,-7.4 L7.6,-5.8 L7.6,0.4 L2.8,3 L-1.4,1.2 Z" fill="#e9e9e9"/>
<path d="M-1.4,-5 L2.8,-3.2 L7.6,-5.8 M2.8,-3.2 L2.8,3" fill="none"/>
<path d="M3.6,-2.6 L6.8,-4.2 L6.8,-0.6 L3.6,1 Z" fill="#2b86c4" stroke="#1b5f92"/>
<path d="M-7.6,1.4 L-2.8,-0.8 L2.4,1.2 L2.4,5.2 L-2.6,7.6 L-7.6,5.4 Z" fill="#e9e9e9"/>
<path d="M-7.6,1.4 L-2.6,3.6 L2.4,1.2 M-2.6,3.6 L-2.6,7.6" fill="none"/>
<path d="M-5.4,-2.6 L-2.6,-4 L0.2,-2.8 L0.2,-0.6 L-2.6,0.8 L-5.4,-0.4 Z" fill="#2b86c4" stroke="#1b5f92"/>
</g>
<g transform="translate(691.3,563.2)" stroke="#3a3a3a" stroke-width="0.55" stroke-linejoin="round">
<path d="M-1.6,-5.4 L3,-7.6 L7.6,-5.6 L7.6,4.6 L3,7.2 L-1.6,5.2 Z" fill="#e9e9e9"/>
<path d="M-1.6,-5.4 L3,-3.4 L7.6,-5.6 M3,-3.4 L3,7.2" fill="none"/>
<path d="M4.4,-2.6 L6.4,-3.6 L6.4,3.4 L4.4,4.4 Z" fill="#f8f8f8"/>
<path d="M-7.4,-2.6 L-3.4,-4.4 L0.6,-2.8 L0.6,4.4 L-3.4,6.4 L-7.4,4.6 Z" fill="#2b86c4" stroke="#1b5f92"/>
<path d="M-7.4,-2.6 L-3.4,-1 L0.6,-2.8 M-3.4,-1 L-3.4,6.4" fill="none" stroke="#1b5f92"/>
<path d="M-5.6,-5.8 L-3.2,-6.8 L-1,-5.8 L-1,-4.2 L-3.2,-3.2 L-5.6,-4.2 Z" fill="#5aa8dc" stroke="#1b5f92"/>
</g>
</g>
</svg>
<!--UI_END-->
</body>
</html>
